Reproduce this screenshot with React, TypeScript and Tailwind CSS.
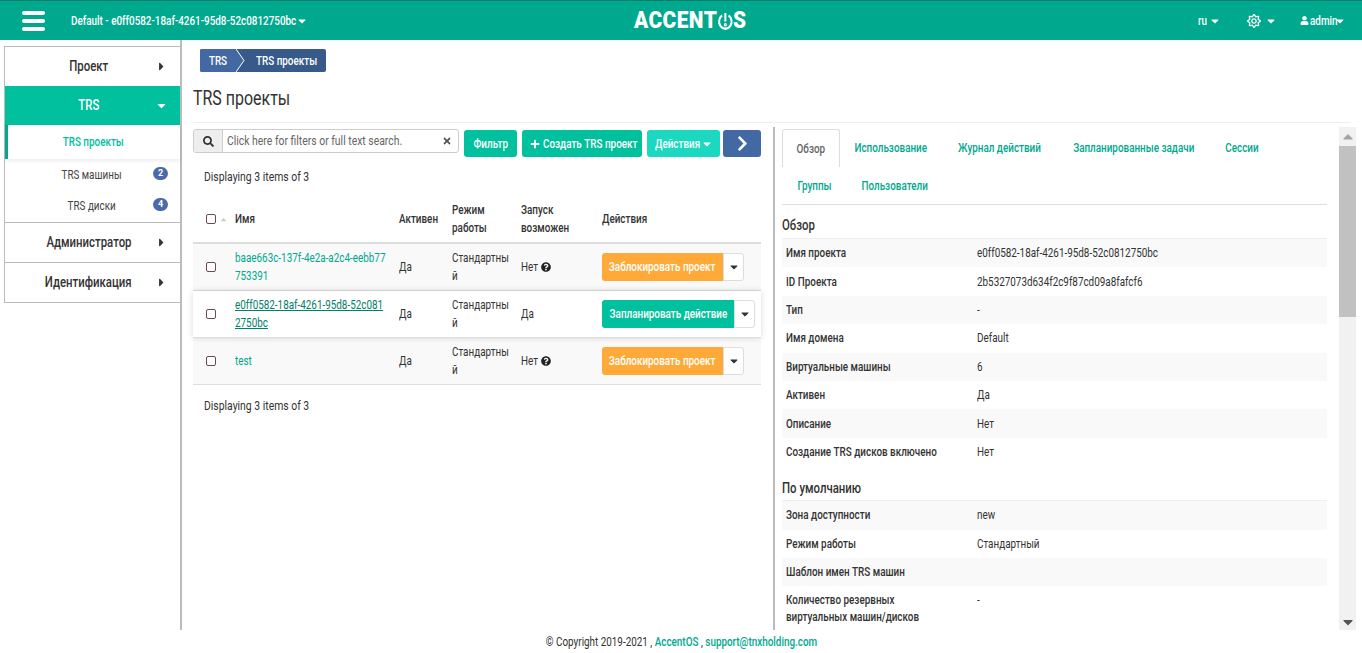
import React from 'react';
import { FaCaretDown, FaCaretRight, FaSearch, FaTimes, FaPlus, FaChevronRight, FaQuestionCircle, FaUser, FaRegSun, FaCaretUp } from 'react-icons/fa';

// The UI font is a condensed face, none is installed, so squeeze Roboto sideways
const T = ({ children, center, className = '' }: { children: React.ReactNode; center?: boolean; className?: string }) => (
  <span className={`inline-block scale-x-[0.76] whitespace-nowrap ${center ? 'origin-center' : 'origin-left'} ${className}`}>{children}</span>
);

const Latin = ({ children }: { children: React.ReactNode }) => (
  <span className="inline-block origin-left scale-x-[0.8] whitespace-nowrap">{children}</span>
);

const NavItem = ({ label, active }: { label: string; active?: boolean }) => (
  <div className={`relative flex h-[39px] items-center justify-center pr-[8px] text-[15px] font-medium ${active ? 'bg-[#00c09d] text-white' : 'bg-white text-[#333]'}`}>
    <T center>{label}</T>
    <span className="absolute right-[12px] top-[13px]">
      {active ? <FaCaretDown className="h-[13px] w-[13px]" /> : <FaCaretRight className="h-[13px] w-[13px]" />}
    </span>
  </div>
);

const SubItem = ({ label, badge }: { label: string; badge: number }) => (
  <div className="relative flex h-[31px] items-center justify-center pr-[2px] text-[13px] text-[#444]">
    <T center>{label}</T>
    <span className="absolute right-[12px] top-[8px] flex h-[13px] w-[15px] items-center justify-center rounded-full bg-[#4a6ba8] text-[9px] font-bold text-white">{badge}</span>
  </div>
);

const Row = ({ id, odd, hover, locked }: { id: string[]; odd?: boolean; hover?: boolean; locked: boolean }) => (
  <div className={`flex h-[47px] items-center border-b border-[#ddd] text-[13px] leading-[18px] text-[#333] ${hover ? 'relative bg-white shadow-[0_0_6px_rgba(0,0,0,0.15)]' : odd ? 'bg-[#f9f9f9]' : 'bg-white'}`}>
    <div className="flex w-[42px] pl-[13px]">
      <span className="h-[10px] w-[10px] rounded-[2px] border border-[#6b4a52] bg-white" />
    </div>
    <div className="w-[164px]">
      {id.map(s => <div key={s} className="h-[18px]"><T className={hover ? 'text-[#00806c] underline' : 'text-[#00a88e]'}>{s}</T></div>)}
    </div>
    <div className="w-[53px]"><T>Да</T></div>
    <div className="w-[69px]"><div className="h-[18px]"><T>Стандартны</T></div><div className="h-[18px]"><T>й</T></div></div>
    <div className="flex w-[81px] items-center">
      <span className={locked ? 'w-[20px]' : ''}><T>{locked ? 'Нет' : 'Да'}</T></span>
      {locked && <FaQuestionCircle className="h-[10px] w-[10px] text-[#222]" />}
    </div>
    <div className="flex h-[28px]">
      <button className={`flex h-[28px] items-center justify-center rounded-l-[3px] text-[13px] font-medium text-white ${locked ? 'w-[121px] bg-[#ffa938]' : 'w-[132px] bg-[#00c09d]'}`}>
        <T center>{locked ? 'Заблокировать проект' : 'Запланировать действие'}</T>
      </button>
      <span className="flex h-[28px] w-[21px] items-center justify-center rounded-r-[3px] border border-[#ddd] bg-white text-[#333]">
        <FaCaretDown className="h-[12px] w-[12px]" />
      </span>
    </div>
  </div>
);

const Detail = ({ k, v, odd, tall }: { k: string[]; v: string; odd?: boolean; tall?: boolean }) => (
  <div className={`flex px-[4px] text-[13px] leading-[17px] text-[#333] ${tall ? 'h-[46px] items-start pt-[5px]' : 'h-[28.4px] items-center pb-[1px]'} ${odd ? 'bg-[#f9f9f9]' : 'bg-white'}`}>
    <div className="w-[191px] font-medium">{k.map(s => <div key={s} className="h-[17px]"><T>{s}</T></div>)}</div>
    <div><T>{v}</T></div>
  </div>
);

const tabs1 = [
  { label: 'Использование', width: 'w-[102px]' },
  { label: 'Журнал действий', width: 'w-[115px]' },
  { label: 'Запланированные задачи', width: 'w-[153px]' },
  { label: 'Сессии', width: 'w-[63px]' },
];

export default function App() {
  return (
    <div className='flex h-[653px] w-[1362px] flex-col overflow-hidden bg-white font-["Roboto",sans-serif]'>
      <header className="relative flex h-[40px] shrink-0 items-center border-t border-[#00806c] bg-[#00a88e] text-white">
        <svg width="24" height="20" viewBox="0 0 24 20" className="ml-[22px]" fill="white">
          <rect x="0" y="0" width="23" height="4" rx="2" />
          <rect x="0" y="8" width="23" height="4" rx="2" />
          <rect x="0" y="16" width="23" height="4" rx="2" />
        </svg>
        <span className="ml-[25px] w-[224px] text-[13px] font-medium"><T>Default - e0ff0582-18af-4261-95d8-52c0812750bc</T></span>
        <FaCaretDown className="ml-[1px] h-[12px] w-[12px]" />
        <div className="absolute left-[634px] top-[6px] flex origin-left scale-x-[0.87] items-center text-[24px] font-black leading-[27px] tracking-[0.5px]">
          ACCENT
          <svg width="18" height="18" viewBox="0 0 17 17" fill="none" stroke="white" strokeWidth="2.2">
            <path d="M5 3.2a6.8 6.8 0 1 0 7 0" />
            <path d="M8.5 1v8" />
            <circle cx="8.5" cy="12" r="0.6" />
          </svg>
          S
        </div>
        <div className="ml-auto mr-[16px] flex items-center text-[13px] font-medium">
          <span className="w-[11px]"><T>ru</T></span>
          <FaCaretDown className="h-[12px] w-[12px]" />
          <FaRegSun className="ml-[26px] h-[14px] w-[14px]" />
          <FaCaretDown className="ml-[4px] h-[12px] w-[12px]" />
          <FaUser className="ml-[23px] h-[9px] w-[9px]" />
          <span className="ml-[1px] w-[24px]"><T>admin</T></span>
          <FaCaretDown className="h-[12px] w-[12px]" />
        </div>
      </header>

      <div className="flex h-[590px] shrink-0">
        <aside className="h-full w-[182px] shrink-0 border-r-2 border-[#bbb] pl-[4px] pt-[6px]">
          <nav className="border border-r-0 border-[#bbb]">
            <NavItem label="Проект" />
            <NavItem label="TRS" active />
            <div className="relative flex h-[34px] items-center justify-center border-l-[3px] border-[#00a88e] pb-[1px] pr-[2px] text-[13px] font-medium text-[#00c09d] shadow-[0_2px_4px_rgba(0,0,0,0.08)]"><T center>TRS проекты</T></div>
            <SubItem label="TRS машины" badge={2} />
            <SubItem label="TRS диски" badge={4} />
            <div className="mt-[1px] border-t border-[#bbb]"><NavItem label="Администратор" /></div>
            <div className="border-t border-[#bbb]"><NavItem label="Идентификация" /></div>
          </nav>
        </aside>

        <main className="min-w-0 flex-1 px-[11px]">
          <div className="ml-[7px] mt-[9px] flex h-[23px] w-[126px] items-center rounded-[2px] bg-[#375a8a] text-[13px] font-medium text-white">
            <div className="relative flex h-full w-[36px] shrink-0 items-center justify-center rounded-l-[2px] bg-[#4369a5]">
              <T center>TRS</T>
              <svg width="10" height="23" viewBox="0 0 10 23" className="absolute left-[36px] top-0">
                <path d="M0 0 L8 11.5 L0 23 Z" fill="#4369a5" />
                <path d="M0 0 L8 11.5 L0 23" fill="none" stroke="white" />
              </svg>
            </div>
            <span className="ml-[20px]"><T>TRS проекты</T></span>
          </div>
          <h1 className="mt-[15px] h-[22px] text-[21px] leading-[22px] text-[#333]"><T>TRS проекты</T></h1>
          <div className="mt-[13px] border-t border-[#eee]" />

          <div className="mt-[4px] flex">
            <section className="w-[568px] shrink-0 pt-[2px]">
              <div className="flex items-start">
                <div className="flex h-[24px] w-[266px] rounded-[3px] border border-[#ccc] text-[13px] text-[#666]">
                  <span className="flex w-[29px] items-center justify-center rounded-l-[3px] border-r border-[#ccc] bg-[#eee] text-[#333]"><FaSearch className="h-[11px] w-[11px]" /></span>
                  <span className="flex flex-1 items-center justify-between pl-[4px] pr-[6px]">
                    <span className="w-[178px]"><Latin>Click here for filters or full text search.</Latin></span>
                    <FaTimes className="h-[10px] w-[10px] text-[#555]" />
                  </span>
                </div>
                <button className="ml-[5px] mt-[1px] flex h-[27px] w-[53px] items-center justify-center rounded-[3px] bg-[#00c09d] text-[13px] font-medium text-white"><T center>Фильтр</T></button>
                <button className="ml-[5px] mt-[1px] flex h-[27px] w-[120px] items-center justify-center gap-[3px] rounded-[3px] bg-[#00c09d] text-[13px] font-medium text-white"><FaPlus className="h-[10px] w-[10px]" /><span className="w-[91px] text-left"><T>Создать TRS проект</T></span></button>
                <button className="ml-[5px] mt-[1px] flex h-[27px] w-[73px] items-center justify-center gap-[2px] rounded-[3px] bg-[#1ad9c0] text-[13px] font-medium text-white"><span className="w-[44px] text-left"><T>Действия</T></span><FaCaretDown className="h-[12px] w-[12px]" /></button>
                <button className="ml-[3px] mt-[1px] flex h-[27px] w-[38px] items-center justify-center rounded-[3px] bg-[#4369a5] text-white"><FaChevronRight className="h-[17px] w-[17px]" /></button>
              </div>
              <div className="mt-[11px] pl-[11px] text-[13px] leading-[18px] text-[#333]"><Latin>Displaying 3 items of 3</Latin></div>

              <div className="mt-[10px] flex h-[48px] items-center border-b-2 border-[#ddd] text-[13px] font-medium leading-[18px] text-[#333]">
                <div className="flex w-[42px] items-center gap-[3px] pl-[13px]">
                  <span className="h-[10px] w-[10px] shrink-0 rounded-[2px] border border-[#6b4a52] bg-white" />
                  <FaCaretUp className="h-[9px] w-[9px] shrink-0 text-[#ccc]" />
                </div>
                <div className="w-[164px]"><T>Имя</T></div>
                <div className="w-[53px]"><T>Активен</T></div>
                <div className="w-[69px]"><div className="h-[18px]"><T>Режим</T></div><div className="h-[18px]"><T>работы</T></div></div>
                <div className="w-[81px]"><div className="h-[18px]"><T>Запуск</T></div><div className="h-[18px]"><T>возможен</T></div></div>
                <div><T>Действия</T></div>
              </div>
              <Row id={['baae663c-137f-4e2a-a2c4-eebb77', '753391']} odd locked />
              <Row id={['e0ff0582-18af-4261-95d8-52c081', '2750bc']} hover locked={false} />
              <Row id={['test']} odd locked />
              <div className="mt-[12px] pl-[11px] text-[13px] leading-[18px] text-[#333]"><Latin>Displaying 3 items of 3</Latin></div>
            </section>

            <section className="ml-[12px] flex h-[503px] min-w-0 flex-1 border-l-2 border-[#bbb]">
              <div className="w-[552px] shrink-0 overflow-hidden pl-[7px] pt-[2px]">
                <div className="border-b border-[#ddd] text-[13px] font-medium text-[#00a88e]">
                  <div className="flex h-[38px]">
                    <span className="flex h-[38px] w-[58px] items-center justify-center rounded-t-[3px] border border-b-0 border-[#ddd] text-[#666]"><T center>Обзор</T></span>
                    {tabs1.map(t => <span key={t.label} className={`flex items-center justify-center ${t.width}`}><T center>{t.label}</T></span>)}
                  </div>
                  <div className="flex h-[37px] items-center">
                    <span className="flex w-[65px] justify-center"><T center>Группы</T></span>
                    <span className="flex w-[96px] justify-center"><T center>Пользователи</T></span>
                  </div>
                </div>
                <h3 className="mt-[12px] h-[21px] text-[15px] font-medium leading-[16px] text-[#333]"><T>Обзор</T></h3>
                <div className="border-t border-[#eee]">
                  <Detail k={['Имя проекта']} v="e0ff0582-18af-4261-95d8-52c0812750bc" odd />
                  <Detail k={['ID Проекта']} v="2b5327073d634f2c9f87cd09a8fafcf6" />
                  <Detail k={['Тип']} v="-" odd />
                  <Detail k={['Имя домена']} v="Default" />
                  <Detail k={['Виртуальные машины']} v="6" odd />
                  <Detail k={['Активен']} v="Да" />
                  <Detail k={['Описание']} v="Нет" odd />
                  <Detail k={['Создание TRS дисков включено']} v="Нет" />
                </div>
                <h3 className="mt-[14px] h-[20px] text-[15px] font-medium leading-[16px] text-[#333]"><T>По умолчанию</T></h3>
                <div className="border-t border-[#eee]">
                  <Detail k={['Зона доступности']} v="new" odd />
                  <Detail k={['Режим работы']} v="Стандартный" />
                  <Detail k={['Шаблон имен TRS машин']} v="" odd />
                  <Detail k={['Количество резервных', 'виртуальных машин/дисков']} v="-" tall />
                </div>
              </div>
              <div className="ml-[12px] flex w-[17px] shrink-0 flex-col items-center bg-[#f1f1f1]">
                <FaCaretUp className="h-[19px] w-[10px] shrink-0 text-[#a3a3a3]" />
                <div className="h-[171px] w-full shrink-0 bg-[#c1c1c1]" />
                <FaCaretDown className="mt-auto h-[16px] w-[10px] shrink-0 text-[#555]" />
              </div>
            </section>
          </div>
        </main>
      </div>

      <footer className="flex flex-1 items-center justify-center text-[13px] text-[#333]">
        <T center>© Copyright 2019-2021 , <span className="font-medium text-[#00a88e]">AccentOS</span> , <span className="font-medium text-[#00a88e]">support@tnxholding.com</span></T>
      </footer>
    </div>
  );
}
